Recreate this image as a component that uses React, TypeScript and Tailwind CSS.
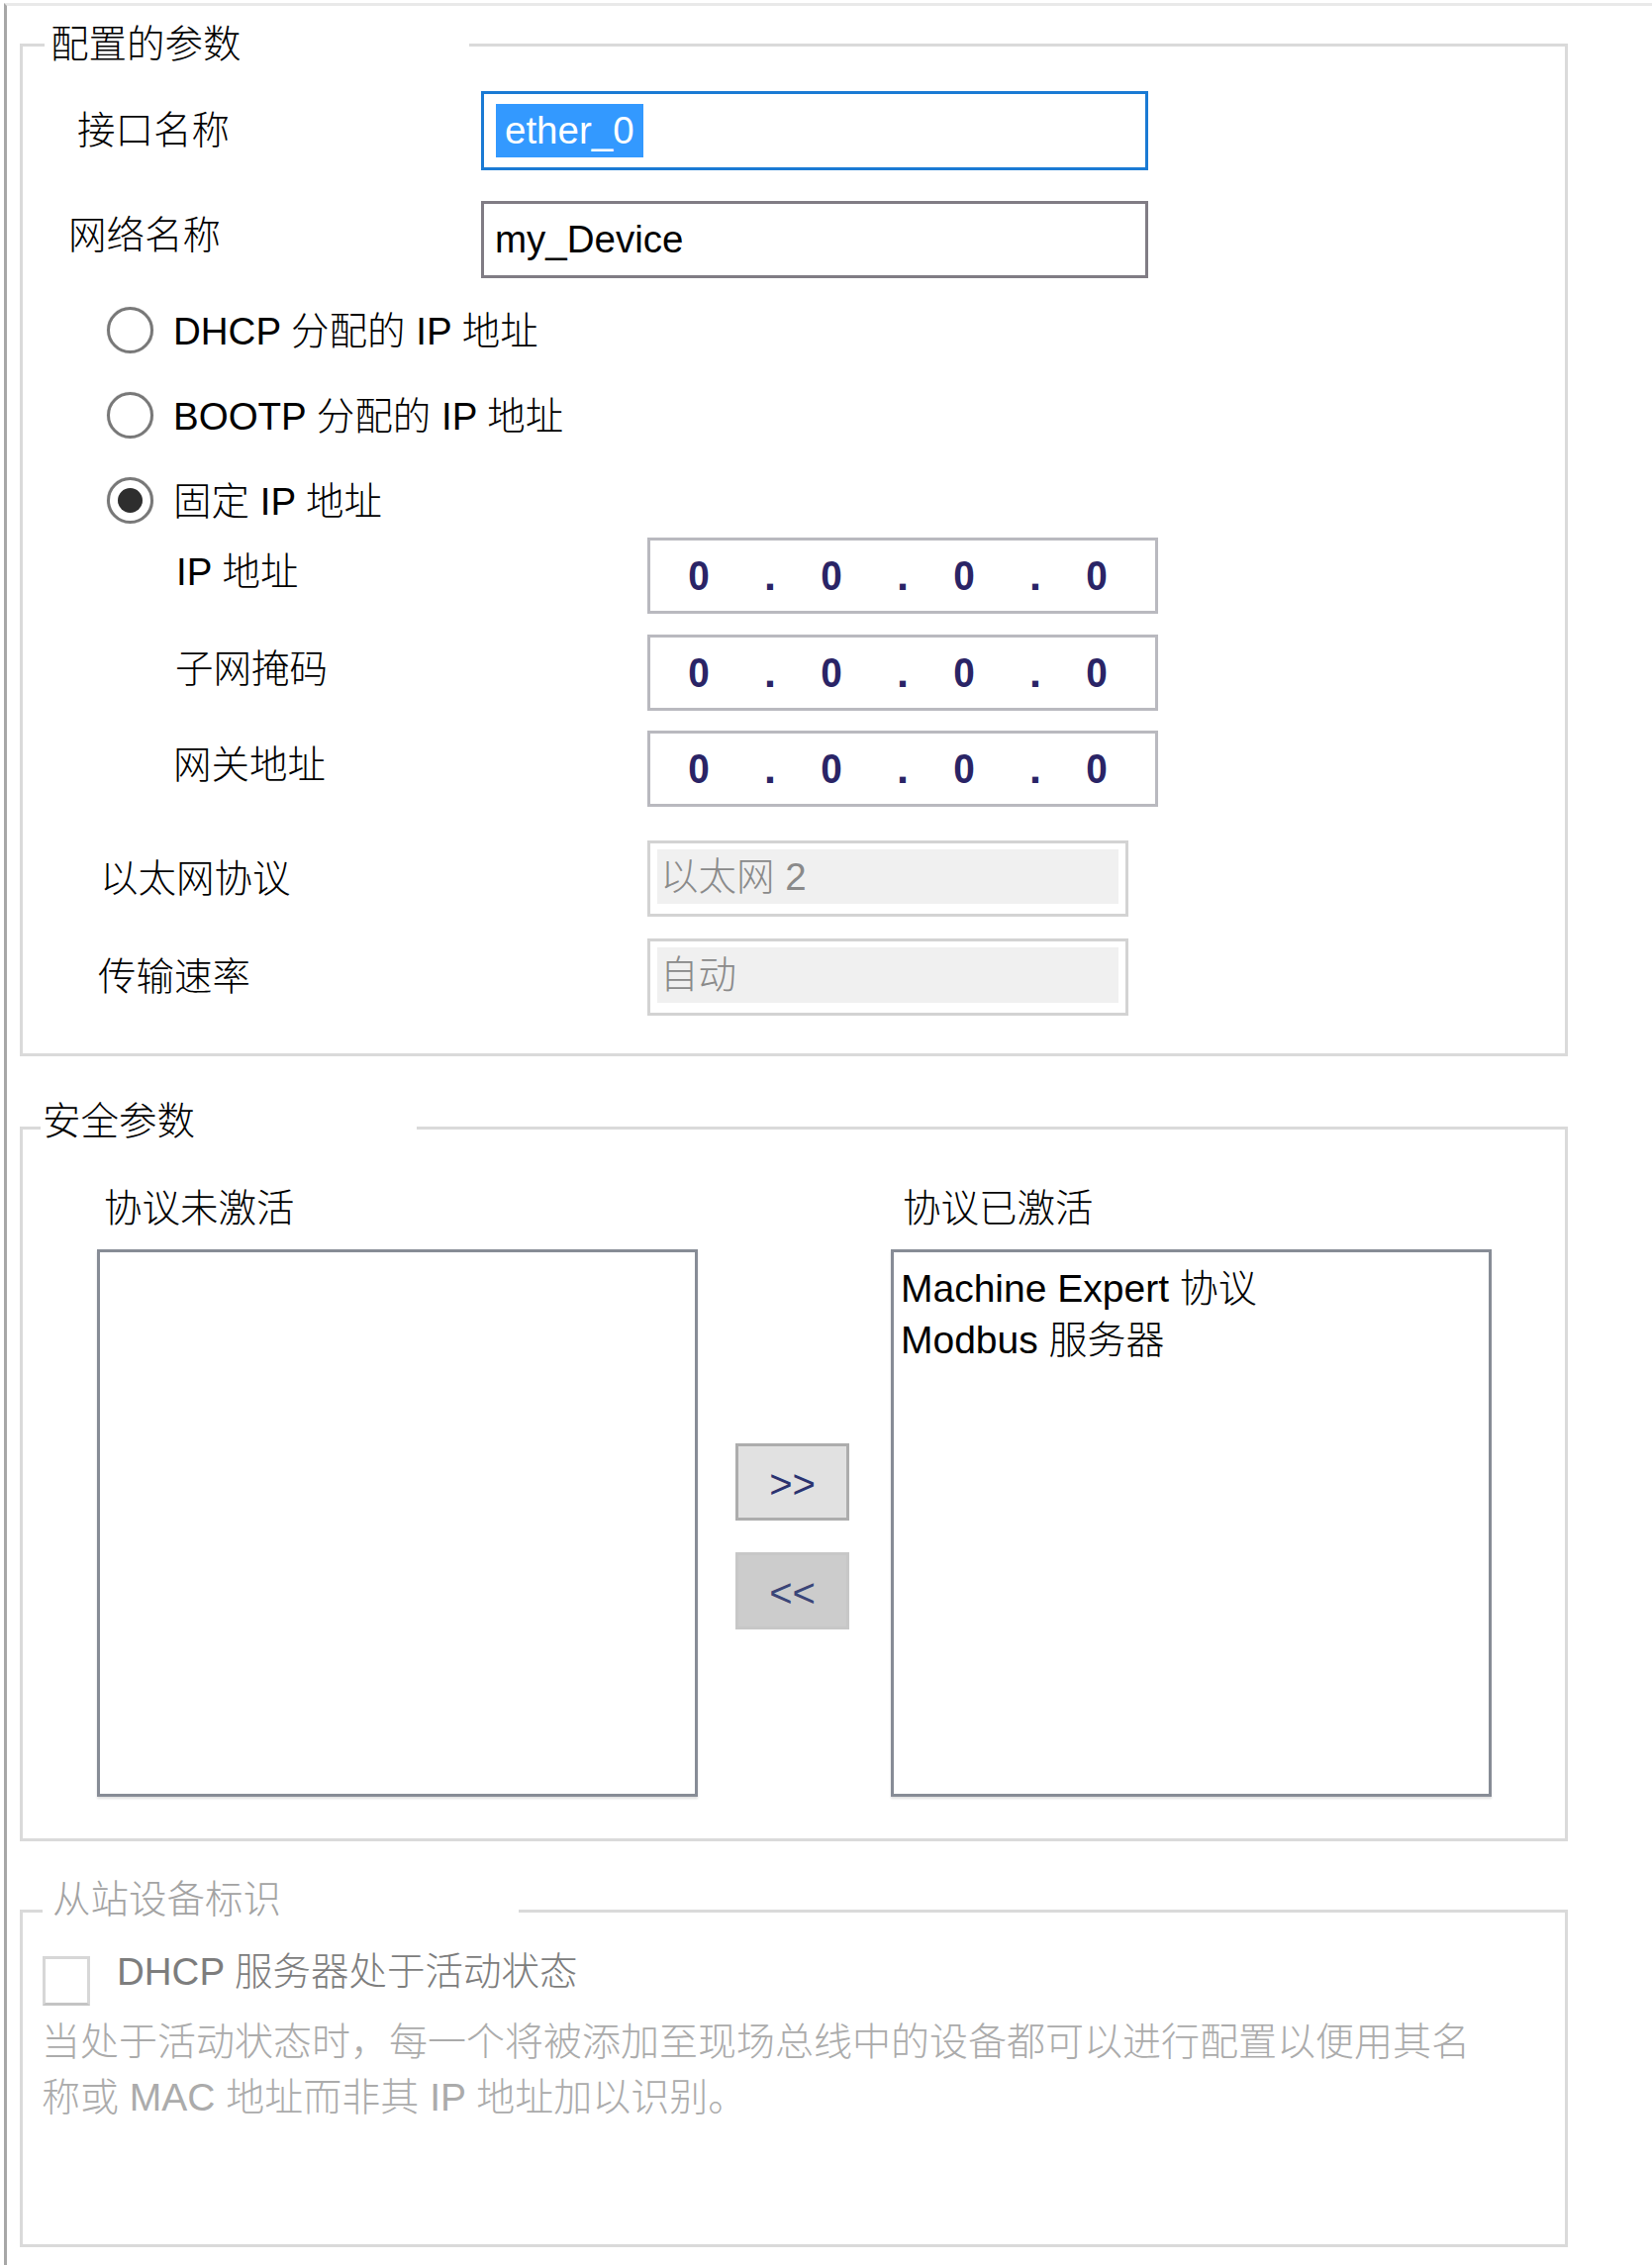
import type { ReactNode } from "react";

interface GroupBoxProps {
  title: string;
  legendClassName: string;
  className?: string;
  children: ReactNode;
}

function GroupBox({ title, legendClassName, className = "", children }: GroupBoxProps) {
  return (
    <fieldset className={`w-[1564px] border-[3px] border-[#dadada] ${className}`}>
      <legend className={`leading-[44px] ${legendClassName}`}>{title}</legend>
      {children}
    </fieldset>
  );
}

interface FieldRowProps {
  label: string;
  labelClassName: string;
  className: string;
  children: ReactNode;
}

function FieldRow({ label, labelClassName, className, children }: FieldRowProps) {
  return (
    <div className={`flex items-center ${className}`}>
      <div className={`shrink-0 ${labelClassName}`}>{label}</div>
      {children}
    </div>
  );
}

function Radio({ label, checked = false, className }: { label: string; checked?: boolean; className: string }) {
  return (
    <div className={`ml-[85px] flex h-[50px] items-center ${className}`}>
      <span className="flex h-[47px] w-[47px] items-center justify-center rounded-full border-[3px] border-[#787878] shadow-[0_0_1px_#9a9a9a]">
        {checked && <span className="h-[25px] w-[25px] rounded-full bg-[#2e2e2e]" />}
      </span>
      <span className="ml-[20px] pt-[4px]">{label}</span>
    </div>
  );
}

function IpBox() {
  const parts = ["0", "0", "0", "0"];
  return (
    <div className="flex h-full w-[516px] items-center border-[3px] border-[#b9b9bf] pl-[29px] text-[43px] font-bold text-[#2a2466]">
      {parts.map((part, i) => (
        <div key={i} className="flex">
          <span className="w-[40px] scale-x-90 text-center">{part}</span>
          {i < 3 && <span className="w-[94px] pl-[10px] text-center">.</span>}
        </div>
      ))}
    </div>
  );
}

function ReadonlyCombo({ value }: { value: string }) {
  return (
    <div className="h-full w-[486px] border-[3px] border-[#d3d3d3] bg-white px-[7px] pt-[6px] pb-[10px]">
      <div className="flex h-full items-center bg-[#f0f0f0] pl-[3px] text-[#8a8a8a]">{value}</div>
    </div>
  );
}

export default function App() {
  return (
    <div className="h-[2288px] w-[1669px] overflow-hidden bg-white pt-[3px] pl-[4px] font-['Liberation_Sans','Noto_Sans_CJK_SC',sans-serif] text-[38.5px] font-light leading-normal text-black">
      <div className="h-full border-t-[3px] border-l-[3px] border-t-[#e9e9e9] border-l-[#a7a7a7] pt-[16px] pl-[13px]">
        <GroupBox
          title="配置的参数"
          legendClassName="ml-[22px] w-[429px] py-[1px] pl-[6px]"
          className="pb-[38px]"
        >
          <FieldRow label="接口名称" labelClassName="w-[463px] pl-[55px]" className="mt-[24px] h-[80px]">
            <div className="flex h-full w-[674px] items-center border-[3px] border-[#1a7ad4] pl-[12px]">
              <span className="bg-[#3399ff] px-[9px] leading-[54px] text-white">ether_0</span>
            </div>
          </FieldRow>
          <FieldRow label="网络名称" labelClassName="w-[463px] pl-[46px] pb-[8px]" className="mt-[31px] h-[78px]">
            <div className="flex h-full w-[674px] items-center border-[3px] border-[#807c84] pl-[11px]">
              my_Device
            </div>
          </FieldRow>

          <Radio label="DHCP 分配的 IP 地址" className="mt-[27px]" />
          <Radio label="BOOTP 分配的 IP 地址" className="mt-[36px]" />
          <Radio label="固定 IP 地址" checked className="mt-[36px]" />

          <FieldRow label="IP 地址" labelClassName="w-[631px] pl-[155px] pb-[8px]" className="mt-[13px] h-[77px]">
            <IpBox />
          </FieldRow>
          <FieldRow label="子网掩码" labelClassName="w-[631px] pl-[154px] pb-[8px]" className="mt-[21px] h-[77px]">
            <IpBox />
          </FieldRow>
          <FieldRow label="网关地址" labelClassName="w-[631px] pl-[152px] pb-[8px]" className="mt-[20px] h-[77px]">
            <IpBox />
          </FieldRow>

          <FieldRow label="以太网协议" labelClassName="w-[631px] pl-[78px]" className="mt-[34px] h-[77px]">
            <ReadonlyCombo value="以太网 2" />
          </FieldRow>
          <FieldRow label="传输速率" labelClassName="w-[631px] pl-[76px]" className="mt-[22px] h-[78px]">
            <ReadonlyCombo value="自动" />
          </FieldRow>
        </GroupBox>

        <GroupBox
          title="安全参数"
          legendClassName="ml-[18px] w-[380px] pb-[12px] pl-[2px]"
          className="mt-[44px] pb-[42px]"
        >
          <div className="mt-[32px] flex pl-[75px]">
            <div className="w-[607px]">
              <div className="pl-[7px] leading-[44px]">协议未激活</div>
              <div className="mt-[19px] h-[553px] border-[3px] border-[#878c96] shadow-[0_2px_2px_rgba(0,0,0,0.12)]" />
            </div>
            <div className="ml-[38px] flex w-[115px] flex-col pt-[259px]">
              <button className="flex h-[78px] items-center justify-center border-[3px] border-[#adadad] bg-[#e1e1e1] pt-[4px] text-[40px] leading-none text-[#2b3370]">
                &gt;&gt;
              </button>
              <button className="mt-[32px] flex h-[78px] items-center justify-center border-[3px] border-[#c7c7c7] bg-[#cccccc] pt-[4px] text-[40px] leading-none text-[#3a4578]">
                &lt;&lt;
              </button>
            </div>
            <div className="ml-[42px] w-[607px]">
              <div className="pl-[12px] leading-[44px]">协议已激活</div>
              <div className="mt-[19px] h-[553px] border-[3px] border-[#878c96] pt-[11px] pl-[7px] text-[39px] leading-[52px] shadow-[0_2px_2px_rgba(0,0,0,0.12)]">
                <div>Machine Expert 协议</div>
                <div>Modbus 服务器</div>
              </div>
            </div>
          </div>
        </GroupBox>

        <GroupBox
          title="从站设备标识"
          legendClassName="ml-[20px] w-[481px] pb-[22px] pl-[10px] text-[#a3a3a3]"
          className="mt-[37px] pb-[120px]"
        >
          <div className="mt-[13px] ml-[20px] flex items-start">
            <div className="h-[50px] w-[48px] border-[3px] border-[#d7d7d7] border-b-[#c4c4c4] bg-white" />
            <div className="-mt-[6px] ml-[27px] leading-[44px] text-[#7d7d7d]">DHCP 服务器处于活动状态</div>
          </div>
          <p className="mt-[9px] ml-[19px] w-[1470px] text-[39px] leading-[56px] text-[#ababab]">
            当处于活动状态时，每一个将被添加至现场总线中的设备都可以进行配置以便用其名称或 MAC 地址而非其 IP 地址加以识别。
          </p>
        </GroupBox>
      </div>
    </div>
  );
}
